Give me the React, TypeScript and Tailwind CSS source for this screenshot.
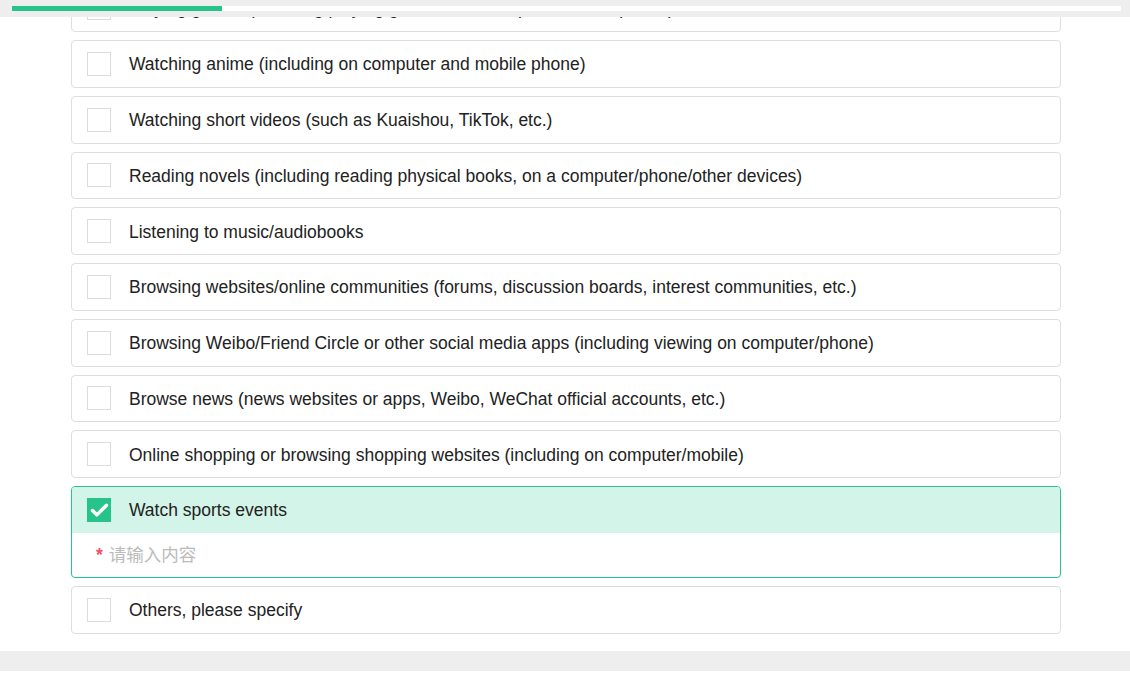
import { Check } from 'lucide-react';

const options = [
  'Watching anime (including on computer and mobile phone)',
  'Watching short videos (such as Kuaishou, TikTok, etc.)',
  'Reading novels (including reading physical books, on a computer/phone/other devices)',
  'Listening to music/audiobooks',
  'Browsing websites/online communities (forums, discussion boards, interest communities, etc.)',
  'Browsing Weibo/Friend Circle or other social media apps (including viewing on computer/phone)',
  'Browse news (news websites or apps, Weibo, WeChat official accounts, etc.)',
  'Online shopping or browsing shopping websites (including on computer/mobile)',
];

function Box({ checked = false }: { checked?: boolean }) {
  if (checked) {
    return (
      <span className="flex h-[24px] w-[24px] shrink-0 items-center justify-center bg-[#26c48a]">
        <Check className="h-[21px] w-[21px] text-white" strokeWidth={4} />
      </span>
    );
  }
  return <span className="h-[24px] w-[24px] shrink-0 border border-[#dcdcdc] bg-white" />;
}

function OptionCard({ label }: { label: string }) {
  return (
    <div className="flex h-[47.75px] items-center rounded-[4px] border border-[#dedede] bg-white pl-[15px]">
      <Box />
      <span className="ml-[18px] pt-[1px] text-[17.5px] text-[#222]">{label}</span>
    </div>
  );
}

export default function App() {
  return (
    <div className="h-[681px] w-[1130px] overflow-hidden bg-white font-['Liberation_Sans','Noto_Sans_CJK_SC',sans-serif]">
      <div className="flex h-[17px] items-center bg-[#eeeeee] px-[12px] pr-[9px]">
        <div className="h-[5px] w-full bg-white">
          <div className="h-full w-[210px] bg-[#26c48a]" />
        </div>
      </div>
      <div className="w-[990px] pl-[71px] box-content">
        <div className="h-[15px] overflow-hidden">
          <div className="-mt-[33px]">
            <OptionCard label="Playing games (including playing games on a computer/mobile phone)" />
          </div>
        </div>
        <div className="mt-[8px] flex flex-col gap-[8px]">
          {options.map((o) => (
            <OptionCard key={o} label={o} />
          ))}
          <div className="overflow-hidden rounded-[4px] border border-[#26c48a] bg-white">
            <div className="flex h-[46px] items-center bg-[#d3f4e8] pl-[15px]">
              <Box checked />
              <span className="ml-[18px] pt-[1px] text-[17.5px] text-[#222]">Watch sports events</span>
            </div>
            <div className="flex h-[44px] items-center pl-[24px] text-[17.5px]">
              <span className="mr-[6px] font-bold text-[#f0506e]">*</span>
              <span className="text-[#bbbbbb]">请输入内容</span>
            </div>
          </div>
          <OptionCard label="Others, please specify" />
        </div>
      </div>
      <div className="mt-[17px] h-[20px] bg-[#eeeeee]" />
    </div>
  );
}
